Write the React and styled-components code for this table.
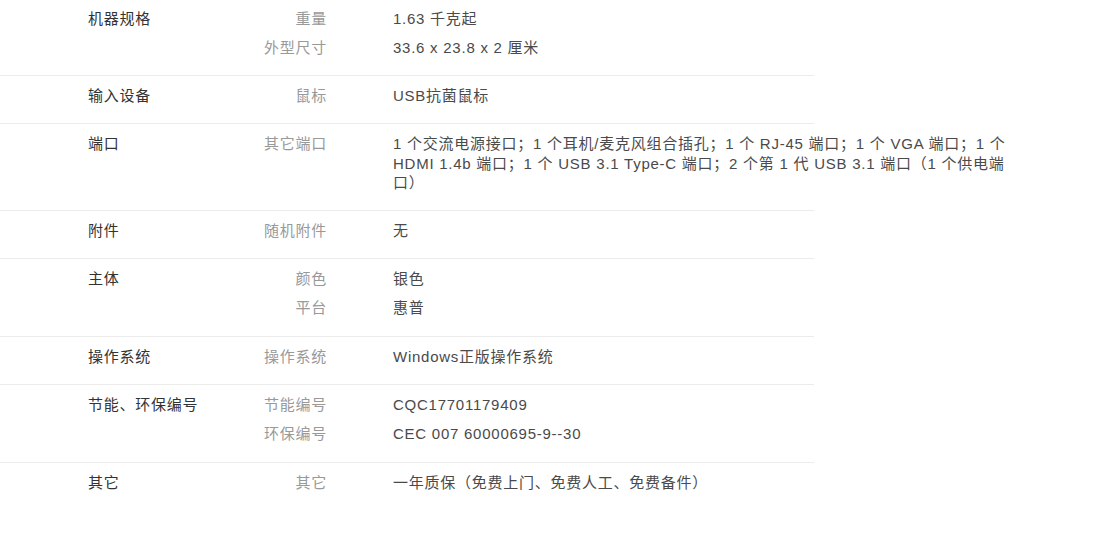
import React from "react";
import styled, { createGlobalStyle } from "styled-components";

const specs = [
    { group: "机器规格", items: [["重量", "1.63 千克起"], ["外型尺寸", "33.6 x 23.8 x 2 厘米"]] },
    { group: "输入设备", items: [["鼠标", "USB抗菌鼠标"]] },
    {
        group: "端口",
        items: [[
            "其它端口",
            "1 个交流电源接口；1 个耳机/麦克风组合插孔；1 个 RJ-45 端口；1 个 VGA 端口；1 个 HDMI 1.4b 端口；1 个 USB 3.1 Type-C 端口；2 个第 1 代 USB 3.1 端口（1 个供电端口）",
        ]],
    },
    { group: "附件", items: [["随机附件", "无"]] },
    { group: "主体", items: [["颜色", "银色"], ["平台", "惠普"]] },
    { group: "操作系统", items: [["操作系统", "Windows正版操作系统"]] },
    { group: "节能、环保编号", items: [["节能编号", "CQC17701179409"], ["环保编号", "CEC 007 60000695-9--30"]] },
    { group: "其它", items: [["其它", "一年质保（免费上门、免费人工、免费备件）"]] },
];

const GlobalStyle = createGlobalStyle`
  body {
    margin: 0;
    background: #fff;
    font-family: "Liberation Sans", "Noto Sans CJK SC", sans-serif;
  }
`;

const Table = styled.div`
  width: 814px;
  margin-top: -1px;
  font-size: 15px;
  letter-spacing: 0.75px;
  line-height: 20px;
`;

const Row = styled.div`
  display: flex;
  padding: 10px 0 ${(p) => (p.$tall ? 9 : 8)}px 88px;
  border-top: ${(p) => (p.$first ? "none" : "1px solid #ececec")};
`;

const Group = styled.div`
  flex: 0 0 140px;
  color: #333;
`;

const Items = styled.div`
  display: grid;
  grid-template-columns: 99px 625px;
  column-gap: 66px;
  row-gap: 9px;
  padding-bottom: 9px;
`;

const Key = styled.div`
  color: #999;
  text-align: right;
`;

const Value = styled.div`
  color: #4a4a4a;
  line-height: ${(p) => (p.$long ? "19.5px" : "20px")};
`;

export default function App() {
    return (
        <>
            <GlobalStyle />
            <Table>
                {specs.map((s, i) => (
                    <Row key={s.group} $first={i === 0} $tall={s.items.length > 1 && i > 0}>
                        <Group>{s.group}</Group>
                        <Items>
                            {s.items.map(([k, v]) => (
                                <React.Fragment key={k}>
                                    <Key>{k}</Key>
                                    <Value $long={v.length > 60}>{v}</Value>
                                </React.Fragment>
                            ))}
                        </Items>
                    </Row>
                ))}
            </Table>
        </>
    );
}
